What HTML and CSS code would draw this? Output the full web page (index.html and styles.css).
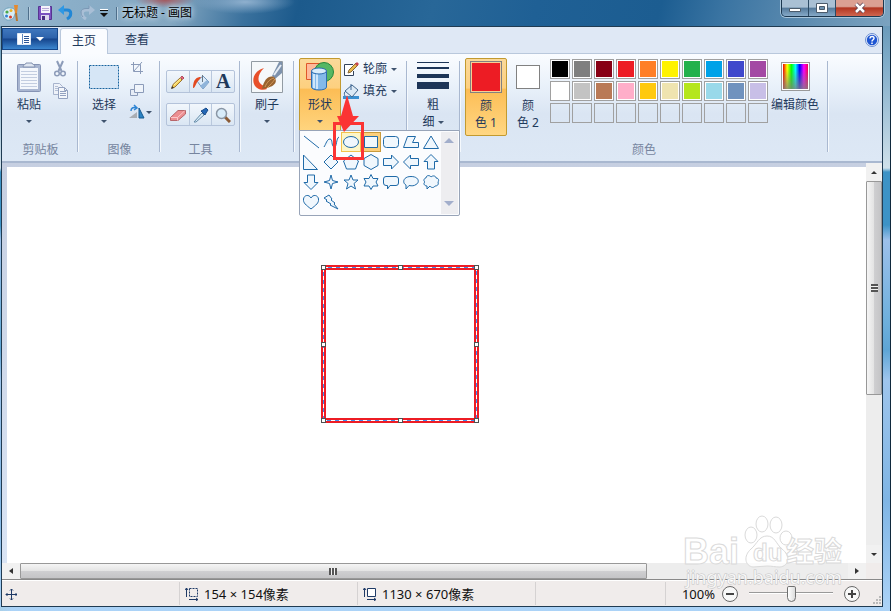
FILE: index.html
```html
<!DOCTYPE html>
<html lang="zh-CN">
<head>
<meta charset="utf-8">
<title>无标题 - 画图</title>
<link rel="stylesheet" href="styles.css">
</head>
<body>
<div class="window">
  <header class="titlebar">
    <div class="quick">
      <svg class="app-icon" width="18" height="18" viewBox="0 0 18 18"><path d="M1 11C0 6 5 3 9 4c4 0 5 4 4 6s-1 5-5 6-6-2-7-5z" fill="#d9edf5" stroke="#6fa3bd"/><circle cx="5" cy="8" r="1.6" fill="#4aa94a"/><circle cx="9" cy="6.500" r="1.500" fill="#e8b32a"/><circle cx="4.500" cy="12" r="1.500" fill="#3481d6"/><circle cx="8.500" cy="13" r="1.500" fill="#d43b2c"/><path d="M14 9l1 8" stroke="#b9762e" stroke-width="2"/><path d="M12 1l4 0-1 8h-2z" fill="#e68a2d"/></svg>
      <i class="bar"></i>
      <button aria-label="保存"><svg width="16" height="16" viewBox="0 0 16 16"><path d="M1.500 1.500h13v13h-13z" fill="#7b4fc0" stroke="#573491"/><path d="M4 1h9v7H4z" fill="#f5f2fb"/><path d="M5 3.500h7M5 5.500h7" stroke="#b8a8d8"/><path d="M4 10h8v5H4z" fill="#ded5ee"/><path d="M5 11h3v4H5z" fill="#4a2c80"/></svg></button>
      <button aria-label="撤消"><svg width="16" height="16" viewBox="0 0 16 16"><path d="M4 5h5c5 0 5 6 0 9" fill="none" stroke="#2187d6" stroke-width="3"/><path d="M6 0v10L0 5z" fill="#2e98e4"/></svg></button>
      <button aria-label="重做" disabled><svg width="16" height="16" viewBox="0 0 16 16"><path d="M12 5H7c-5 0-5 6 0 9" fill="none" stroke="#a9bfd6" stroke-width="3"/><path d="M10 0v10l6-5z" fill="#a9bfd6"/><path d="M10 .5v3H7C1 3.500 1 9 4 12" fill="none" stroke="#7b98b5"/></svg></button>
      <button aria-label="自定义快速访问工具栏"><svg width="8" height="8" viewBox="0 0 8 8"><path d="M0 0h8v1H0z" fill="#fff"/><path d="M0 1h8v1H0zM0 4h8L4 8z" fill="#111"/></svg></button>
      <i class="bar"></i>
    </div>
    <h1>无标题 - 画图</h1>
    <div class="controls">
      <button aria-label="最小化"><svg width="12" height="12" viewBox="0 0 12 12"><path d="M.5 6.500h11v3H.5z" fill="#fff" stroke="#4b5b6b"/></svg></button>
      <button aria-label="最大化"><svg width="12" height="12" viewBox="0 0 12 12"><path d="M.5 1.500h11v9H.5z" fill="#fff" stroke="#4b5b6b"/><path d="M3.500 4.500h5v3h-5z" fill="#6f93b0" stroke="#4b5b6b"/></svg></button>
      <button class="close" aria-label="关闭"><svg width="12" height="12" viewBox="0 0 12 12"><path d="M2 2l8 8M10 2l-8 8" stroke="#5b4050" stroke-width="4"/><path d="M2 2l8 8M10 2l-8 8" stroke="#fff" stroke-width="2.500"/></svg></button>
    </div>
  </header>

  <div class="client">
    <nav class="tabs">
      <button class="file" aria-label="画图菜单"><svg width="14" height="12" viewBox="0 0 14 12"><path d="M.5.5h13v11H.5z" fill="#fff" stroke="#dfe9f6"/><path d="M5.500 1v10" stroke="#5f86bd"/><path d="M7 3.500h5M7 5.500h5M7 7.500h5M7 9.500h5" stroke="#2c5595"/></svg><i class="caret white"></i></button>
      <a class="tab active" href="#home">主页</a>
      <a class="tab" href="#view">查看</a>
      <button class="help" aria-label="帮助"><svg width="14" height="14" viewBox="0 0 14 14"><circle cx="7" cy="7" r="6.500" fill="#e9f0fb" stroke="#6d8fd0"/><circle cx="7" cy="7" r="5.200" fill="#1f56d2"/><path d="M5 5.500c0-3 4.500-2.500 4 0C8.800 6.800 7 6.800 7 8.500M7 9.500V11" fill="none" stroke="#fff" stroke-width="1.500"/></svg></button>
    </nav>

    <section class="ribbon" id="home">
      <div class="group clipboard">
        <div class="body">
          <button class="big">
            <svg width="32" height="32" viewBox="0 0 32 32"><rect x="4.500" y="3.500" width="23" height="27" rx="1" fill="#a9b6d1" stroke="#8694b5"/><path d="M7 7h18v21H7z" fill="#f4f7fc"/><path d="M8 10.500h16M8 13.500h16M8 16.500h16M8 19.500h16M8 22.500h16M8 25.500h16" stroke="#c3cde0"/><path d="M10 6c0-3 3-2 3-4h6c0 2 3 1 3 4z" fill="#dfe6f1" stroke="#8492b0"/></svg>
            <span>粘贴</span><i class="caret"></i>
          </button>
          <div class="stack">
            <button aria-label="剪切"><svg width="16" height="18" viewBox="0 0 16 18"><path d="M5 1l4.500 10M11 1L6.500 11" stroke="#8d9cb9" stroke-width="2"/><circle cx="5" cy="13.500" r="2.300" fill="none" stroke="#8d9cb9" stroke-width="1.500"/><circle cx="11" cy="13.500" r="2.300" fill="none" stroke="#8d9cb9" stroke-width="1.500"/></svg></button>
            <button aria-label="复制"><svg width="16" height="18" viewBox="0 0 16 18"><path d="M1.500 1.500h6l3 3v8h-9z" fill="#eef2f9" stroke="#a7b4cd"/><path d="M3 4.500h3M3 6.500h4M3 8.500h4" stroke="#b3bfd5"/><path d="M6.500 5.500h6l3 3v8h-9z" fill="#f4f7fb" stroke="#93a2c0"/><path d="M12.500 5.500v3h3M8 9.500h6M8 11.500h6M8 13.500h6" fill="none" stroke="#93a2c0"/></svg></button>
          </div>
        </div>
        <h2>剪贴板</h2>
      </div>

      <div class="group image">
        <div class="body">
          <button class="big">
            <svg width="32" height="32" viewBox="0 0 32 32"><path d="M1.500 4.500h29v23h-29z" fill="#d6e6f6" stroke="#17639f" stroke-dasharray="2 1"/></svg>
            <span>选择</span><i class="caret"></i>
          </button>
          <div class="stack">
            <button aria-label="裁剪"><svg width="16" height="16" viewBox="0 0 16 16"><path d="M4.500 2v9.500H14M2 4.500h9.500V14M5 11l8-9" fill="none" stroke="#8b9bb9"/></svg></button>
            <button aria-label="重新调整大小"><svg width="16" height="16" viewBox="0 0 16 16"><path d="M1.500 7.500h7v6h-7z" fill="#e7edf6" stroke="#8b9bb9"/><path d="M5.500 2.500h9v8h-9z" fill="#eff4fa" stroke="#8b9bb9"/></svg></button>
            <button class="rotate" aria-label="旋转"><svg width="16" height="16" viewBox="0 0 16 16"><path d="M0 14L8 8v6z" fill="#a9adb3"/><path d="M10 14V4l5 10z" fill="#2c83c4" stroke="#14588f"/><path d="M2 7c0-3 2-4 5-3M5 1l3 3-3 2" fill="none" stroke="#2d84d4" stroke-width="1.500"/></svg><i class="caret"></i></button>
          </div>
        </div>
        <h2>图像</h2>
      </div>

      <div class="group tools">
        <div class="body">
          <div class="toolbar">
            <button aria-label="铅笔"><svg width="16" height="16" viewBox="0 0 16 16"><path d="M2 14l1-3.500L10 4l2 2-7 7z" fill="#f8d45c" stroke="#9a7434"/><path d="M4 11l7-6.500" stroke="#fff0a0"/><path d="M10.500 3.500L12 2l2 2-1.500 1.500z" fill="#e5677c" stroke="#b0505e"/><path d="M1 15l1-3 2 2z" fill="#3e3529"/></svg></button>
            <button aria-label="用颜色填充"><svg width="18" height="16" viewBox="0 0 18 16"><path d="M5 7l6-5 6 6-6 7z" fill="#dcebf9" stroke="#6e93bb"/><path d="M8 12l7-6 2 2-6 7z" fill="#8fb4da"/><path d="M10.500 8V1" stroke="#687886"/><path d="M9 3C5 3 1 5 1 14c2 1 3-6 6-8z" fill="#e34a20"/></svg></button>
            <button aria-label="文本" class="letter">A</button>
          </div>
          <div class="toolbar">
            <button aria-label="橡皮擦"><svg width="16" height="16" viewBox="0 0 16 16"><path d="M.5 10.500L8 3.500h7.500V7L8 13.500H.5z" fill="#ec8e91" stroke="#b7656a"/><path d="M1 10.500h6.500l7-6.500M7.500 10.500v3" fill="none" stroke="#fbc6c8"/></svg></button>
            <button aria-label="颜色选取器"><svg width="16" height="16" viewBox="0 0 16 16"><path d="M1 15l8-9 2 2-8 7z" fill="#d7ebf7" stroke="#668ca9"/><path d="M8 4l4 4 1-2 2-3-2-2-3 2z" fill="#2368b6" stroke="#174a8a"/></svg></button>
            <button aria-label="放大镜"><svg width="16" height="16" viewBox="0 0 16 16"><path d="M10 10l5 5" stroke="#8b5b37" stroke-width="3"/><circle cx="6.500" cy="6.500" r="5" fill="#d8ecfa" stroke="#8996a5" stroke-width="1.500"/></svg></button>
          </div>
        </div>
        <h2>工具</h2>
      </div>

      <div class="group brushes">
        <div class="body">
          <button class="big">
            <svg width="32" height="32" viewBox="0 0 32 32"><path d="M.5.5h31v31H.5z" fill="#f5f8fa" stroke="#929ba3"/><path d="M13 7C3 10 1 18 3 23c2 5 8 7 13 5l-2-3C6 23 5 15 13 7z" fill="#e8502a"/><path d="M21 15l7-14h3v11l-7 6z" fill="#7e92ad"/><path d="M23 14l7-10" stroke="#e6edf5" stroke-width="2"/><path d="M11 28c2-10 7-14 12-12 4 4 2 10-12 12z" fill="#99632f"/><path d="M14 26c2-5 5-8 9-9M16 27c3-3 6-6 8-9" fill="none" stroke="#d39a5b"/></svg>
            <span>刷子</span><i class="caret"></i>
          </button>
        </div>
      </div>

      <div class="group shapes">
        <div class="body">
          <button class="big selected" aria-expanded="true">
            <svg width="32" height="32" viewBox="0 0 32 32"><path d="M2.500 2.500h15v16h-15z" fill="#ffb99a" stroke="#e0562a"/><circle cx="20" cy="11" r="9.500" fill="#56b763" stroke="#26873b"/><path d="M7.500 10v16c0 4 15 4 15 0V10z" fill="#83b9ea" stroke="#2e6db0"/><path d="M10 13v14M13 13v15" stroke="#cfe6fa" stroke-width="2"/><ellipse cx="15" cy="10" rx="7.500" ry="3" fill="#d9ecfb" stroke="#2e6db0"/></svg>
            <span>形状</span><i class="caret"></i>
          </button>
          <div class="options">
            <button><svg width="16" height="16" viewBox="0 0 16 16"><path d="M10 3.500H1.500v11h9V10" fill="#fff" stroke="#33435c"/><path d="M5 12l1-3 7-7 2 2-7 7z" fill="#e6b84d" stroke="#8b6836"/><path d="M12 3l2-2 2 2-2 2z" fill="#c74551"/></svg><span>轮廓</span><i class="caret"></i></button>
            <button><svg width="16" height="16" viewBox="0 0 16 16"><path d="M0 13h16v3H0z" fill="#3b90d1"/><path d="M2 8l7-6 6 5-6 7z" fill="#dceaf6" stroke="#43688d"/><path d="M8 7V1M3 8c-2 1-2 3-1 5" fill="none" stroke="#3e6793"/></svg><span>填充</span><i class="caret"></i></button>
          </div>
          <div class="gallery">
            <div class="shape-grid">
              <button aria-label="直线"><svg viewBox="0 0 20 20"><path d="M3 4l15 12"/></svg></button>
              <button aria-label="曲线"><svg viewBox="0 0 20 20"><path d="M3 15c2-3 3-8 6-8s1 7 4 8 2-9 5-10"/></svg></button>
              <button aria-label="椭圆形" class="hover"><svg viewBox="0 0 20 20"><ellipse cx="10" cy="10" rx="7.500" ry="5.500"/></svg></button>
              <button aria-label="矩形" class="chosen"><svg viewBox="0 0 20 20"><path d="M3.500 4.500h13v11h-13z"/></svg></button>
              <button aria-label="圆角矩形"><svg viewBox="0 0 20 20"><rect x="2.500" y="4.500" width="15" height="11" rx="3"/></svg></button>
              <button aria-label="多边形"><svg viewBox="0 0 20 20"><path d="M6.500 4.500h8l-3 6h6v5h-15z"/></svg></button>
              <button aria-label="三角形"><svg viewBox="0 0 20 20"><path d="M10 4l7.500 12.500h-15z"/></svg></button>
              <button aria-label="直角三角形"><svg viewBox="0 0 20 20"><path d="M2.500 3v14.500h14z"/></svg></button>
              <button aria-label="菱形"><svg viewBox="0 0 20 20"><path d="M10 3l7 7-7 7-7-7z"/></svg></button>
              <button aria-label="五边形"><svg viewBox="0 0 20 20"><path d="M10 3l7.500 6-3 8h-9l-3-8z"/></svg></button>
              <button aria-label="六边形"><svg viewBox="0 0 20 20"><path d="M10 2.500l7 4v7l-7 4-7-4v-7z"/></svg></button>
              <button aria-label="右箭头"><svg viewBox="0 0 20 20"><path d="M2.500 6.500h8V3l7 7-7 7v-3.500h-8z"/></svg></button>
              <button aria-label="左箭头"><svg viewBox="0 0 20 20"><path d="M17.500 6.500h-8V3l-7 7 7 7v-3.500h8z"/></svg></button>
              <button aria-label="上箭头"><svg viewBox="0 0 20 20"><path d="M6.500 17V9.500H3l7-7 7 7h-3.500V17z"/></svg></button>
              <button aria-label="下箭头"><svg viewBox="0 0 20 20"><path d="M6.500 3v7.500H3l7 7 7-7h-3.500V3z"/></svg></button>
              <button aria-label="四角星形"><svg viewBox="0 0 20 20"><path d="M10 3l1.500 5.500L17 10l-5.500 1.500L10 17l-1.500-5.500L3 10l5.500-1.500z"/></svg></button>
              <button aria-label="五角星形"><svg viewBox="0 0 20 20"><path d="M10 3l2 5h5l-4 3.500 1.500 5.500-4.500-3-4.500 3L7 11.500 3 8h5z"/></svg></button>
              <button aria-label="六角星形"><svg viewBox="0 0 20 20"><path d="M10 2.500l2 4h5L15 10l2 4h-5l-2 3.500L8 14H3l2-4-2-3.500h5z"/></svg></button>
              <button aria-label="圆角矩形标注"><svg viewBox="0 0 20 20"><path d="M5 4.500h10q2.500 0 2.500 2.500v4q0 2.500-2.500 2.500H9L6.500 17v-3.500H5Q2.500 13.500 2.500 11V7q0-2.500 2.500-2.500z"/></svg></button>
              <button aria-label="椭圆形标注"><svg viewBox="0 0 20 20"><path d="M5 13C1 11 2 4.500 10 4.500s9 6 5 8c-2 1.500-4 1.500-7 1L5 17z"/></svg></button>
              <button aria-label="云形标注"><svg viewBox="0 0 20 20"><path d="M5 6c0-3 4-3 5-1 2-2 5-1 5 1 3 0 3 3 2 4 1 3-1 4-3 4-1 2-4 2-5 0l-3 3 0-3c-3 0-4-3-2-4-2-1-1-4 1-4z"/></svg></button>
              <button aria-label="心形"><svg viewBox="0 0 20 20"><path d="M10 17C5 13 2 11 2.500 7 3 3 8 2 10 6c2-4 7-3 7.500 1 .5 4-2.500 6-7.500 10z"/></svg></button>
              <button aria-label="闪电形"><svg viewBox="0 0 20 20"><path d="M3 6l5-3 3 4-1 1 4 3-1 1 4 5-8-4 1-1-5-3 1-1z"/></svg></button>
            </div>
            <div class="gallery-scroll"><i class="caret up pale"></i><i class="caret pale"></i></div>
          </div>
          <svg class="callout" width="32" height="68" viewBox="0 0 32 68"><path d="M1.500 31.500h28v35h-28z" fill="none" stroke="#fb3434" stroke-width="3"/><path d="M14 3L8 24H4l7 16 15-16h-6z" fill="#fb3434"/></svg>
        </div>
      </div>

      <div class="group size">
        <div class="body">
          <button class="big">
            <svg width="32" height="32" viewBox="0 0 32 32"><path d="M0 1h32v1H0zM0 6h32v2H0zM0 13h32v4H0zM0 21h32v7H0z" fill="#1d3557"/></svg>
            <span>粗<br>细 <i class="caret"></i></span>
          </button>
        </div>
      </div>

      <div class="group colors">
        <div class="body">
          <button class="big color selected"><i class="well red"></i><span>颜<br>色 1</span></button>
          <button class="big color"><i class="well small"></i><span>颜<br>色 2</span></button>
          <div class="palette">
            <button style="--c:#000000" aria-label="黑色"></button><button style="--c:#7f7f7f" aria-label="灰色"></button><button style="--c:#880015" aria-label="深红色"></button><button style="--c:#ed1c24" aria-label="红色"></button><button style="--c:#ff7f27" aria-label="橙色"></button><button style="--c:#fff200" aria-label="黄色"></button><button style="--c:#22b14c" aria-label="绿色"></button><button style="--c:#00a2e8" aria-label="青绿色"></button><button style="--c:#3f48cc" aria-label="靛青色"></button><button style="--c:#a349a4" aria-label="紫色"></button>
            <button style="--c:#ffffff" aria-label="白色"></button><button style="--c:#c3c3c3" aria-label="浅灰色"></button><button style="--c:#b97a57" aria-label="褐色"></button><button style="--c:#ffaec9" aria-label="玫瑰色"></button><button style="--c:#ffc90e" aria-label="金色"></button><button style="--c:#efe4b0" aria-label="浅黄色"></button><button style="--c:#b5e61d" aria-label="酸橙色"></button><button style="--c:#99d9ea" aria-label="淡青绿色"></button><button style="--c:#7092be" aria-label="蓝灰色"></button><button style="--c:#c8bfe7" aria-label="淡紫色"></button>
            <i></i><i></i><i></i><i></i><i></i><i></i><i></i><i></i><i></i><i></i>
          </div>
          <button class="big edit"><i class="spectrum"></i><span>编辑颜色</span></button>
        </div>
        <h2>颜色</h2>
      </div>
    </section>

    <main class="workspace">
      <div class="desk">
        <div class="canvas">
          <svg class="selection" width="158" height="158" viewBox="0 0 158 158"><g fill="none"><path d="M2.500 2.500h153v153h-153z" stroke="#ed1c24" stroke-width="5"/><path d="M2.500 2.500h153v153h-153z" stroke="#3f8cf0"/><path d="M2.500 2.500h153v153h-153z" stroke="#fff" stroke-dasharray="4 4"/></g><g fill="#fff" stroke="#505050"><path d="M.5.5h4v4h-4zM77.500.5h4v4h-4zM153.500.5h4v4h-4zM.5 77.500h4v4h-4zM153.500 77.500h4v4h-4zM.5 153.500h4v4h-4zM77.500 153.500h4v4h-4zM153.500 153.500h4v4h-4z"/></g></svg>
        </div>
      </div>
      <div class="scroll vertical">
        <span class="end"><i class="caret up dark"></i></span>
        <div class="thumb"><i class="grip"></i></div><div class="track"></div>
        <span class="end"><i class="caret dark"></i></span>
      </div>
      <div class="scroll horizontal">
        <span class="end"><i class="caret left dark"></i></span>
        <div class="thumb"><i class="grip"></i></div><div class="track"></div>
        <span class="end"><i class="caret right dark"></i></span>
      </div>
      <div class="corner"></div>
    </main>

    <footer class="status">
      <div class="cell position"><svg width="12" height="12" viewBox="0 0 12 12"><path d="M6.500 1v11M1 6.500h11M5 2.500l1.500-1.500L8 2.500M5 10.500L6.500 12 8 10.500M2.500 5L1 6.500 2.500 8M10.500 5L12 6.500 10.500 8" fill="none" stroke="#1f3a66"/></svg></div>
      <div class="cell"><svg width="14" height="14" viewBox="0 0 14 14"><path d="M4.500 1.500h8v8h-8z" fill="none" stroke="#1f3a66" stroke-dasharray="2 1"/><path d="M1.500 10V1M0 3l1.500-2L3 3M4 12.500h9M11 11l2 1.500-2 1.500" fill="none" stroke="#1f3a66"/></svg><span>154 × 154像素</span></div>
      <div class="cell"><svg width="14" height="14" viewBox="0 0 14 14"><path d="M4.500 1.500h8v8h-8z" fill="#fff" stroke="#1f3a66"/><path d="M1.500 10V1M0 3l1.500-2L3 3M4 12.500h9M11 11l2 1.500-2 1.500" fill="none" stroke="#1f3a66"/></svg><span>1130 × 670像素</span></div>
      <div class="cell spare"></div>
      <div class="zoom">
        <label for="zoom">100%</label>
        <button aria-label="缩小"><svg width="16" height="16" viewBox="0 0 16 16"><circle cx="8" cy="8" r="7.500" fill="#f8f8f8" stroke="#686868"/><path d="M4 7h8v2H4z" fill="#444"/></svg></button>
        <input id="zoom" type="range" min="0" max="100" value="50">
        <button aria-label="放大"><svg width="16" height="16" viewBox="0 0 16 16"><circle cx="8" cy="8" r="7.500" fill="#f8f8f8" stroke="#686868"/><path d="M4 7h8v2H4zM7 4h2v8H7z" fill="#444"/></svg></button>
        <svg class="resize" width="10" height="10" viewBox="0 0 10 10"><path d="M7 1h2v2H7zM4 4h2v2H4zM7 4h2v2H7zM1 7h2v2H1zM4 7h2v2H4zM7 7h2v2H7z" fill="#b9b9b9"/></svg>
      </div>
    </footer>
  </div>
  <svg class="watermark" width="162" height="82" viewBox="0 0 162 82">
    <g class="mark">
      <text x="-2" y="51" class="latin">Bai</text>
      <ellipse cx="66" cy="22" rx="6" ry="8"/><ellipse cx="77" cy="11" rx="6" ry="8"/><ellipse cx="91" cy="12" rx="6" ry="8"/><ellipse cx="101" cy="25" rx="6" ry="7"/>
      <path d="M82 23c8 0 9 8 15 13 9 7 7 17-2 18-5 0-8-1-13-1s-9 1-14 1c-8-1-10-11-2-18 6-5 8-13 16-13z"/>
      <text x="68" y="48" class="du">du</text>
      <text x="101" y="49" class="cjk">经验</text>
    </g>
    <text x="1" y="71" class="url">jingyan.baidu.com</text>
  </svg>
</div>
</body>
</html>
```
FILE: styles.css
```css
* { box-sizing: border-box; }
body {
  margin: 0;
  font: 12px/16px "Noto Sans", "Noto Sans CJK SC", sans-serif;
  color: #1e395b;
}
button { border: 0; padding: 0; margin: 0; background: none; font: inherit; color: inherit; }
svg, i { display: block; flex: none; }
h1, h2 { margin: 0; font: inherit; }

.window {
  position: relative;
  display: flex;
  flex-direction: column;
  height: 100vh;
  min-height: 400px;
  overflow: hidden;
  padding: 0 7px 4px 1px;
  background:
    linear-gradient(90deg, #a8cfe8 0, transparent 12px) left bottom / 100% 4px no-repeat,
    linear-gradient(180deg, #5c8db0 0, #7eabc8 60px, #cfe0ea 168px, #3d93c6 172px, #3d93c6 225px, #9cc0ea 240px, #6fb0dc 320px, #5ea5d5 350px, #9ec5ec 380px, #7fb5e4 500px, #acd3f7 100%);
  border-right: 1px solid #10293d;
}

.titlebar {
  display: flex;
  align-items: center;
  flex: none;
  height: 26px;
  margin: 0 -7px 0 -1px;
  background:
    radial-gradient(ellipse 50px 12px at 245px 2px, #8fb0ce, transparent),
    radial-gradient(ellipse 30px 8px at 165px 0, #a4585e, transparent),
    linear-gradient(105deg, #9bbacf 0, #8aaec8 70px, #84a7c1 170px, #3a719d 240px, #1c5a8c 290px, #286798 420px, #1f6095 520px, #1c5d91 640px, #3a74a2 700px, #6591b3 800px, #7ba3c0 100%);
}
.quick { display: flex; align-items: center; gap: 5px; padding-left: 2px; }
.quick .bar { width: 1px; height: 13px; background: #4f6f8b; box-shadow: 1px 0 #b8cfe0; margin: 0 3px; }
h1 { color: #000; margin-left: 2px; text-shadow: 0 0 6px #d5e4ef, 0 0 6px #d5e4ef; }
.controls {
  display: flex;
  align-self: flex-start;
  margin: 0 6px 0 auto;
  height: 17px;
  border: 1px solid #1c3850;
  border-top: 0;
  border-radius: 0 0 5px 5px;
  overflow: hidden;
  box-shadow: 0 0 0 1px #a9c5da;
}
.controls button {
  display: flex;
  align-items: center;
  justify-content: center;
  width: 27px;
  border-right: 1px solid #2c4a64;
  background: linear-gradient(#a9c0d4 0 45%, #54799a 50%, #86aac8);
}
.controls .close { width: 47px; border: 0; background: linear-gradient(#dba092 0 40%, #b23621 50%, #cf6650); }

.client {
  display: flex;
  flex-direction: column;
  flex: 1;
  min-height: 0;
  border: 1px solid #203b52;
  background: #f0eceb;
}
.tabs { display: flex; align-items: flex-end; flex: none; height: 27px; background: #dfe8f5; border-bottom: 1px solid #b9c8dc; }
.file {
  display: flex;
  align-items: center;
  justify-content: center;
  gap: 5px;
  width: 56px;
  height: 22px;
  margin: 1px 2px 3px 0;
  border: 1px solid #16488c;
  background: linear-gradient(#3f77bd 0, #2d62ab 45%, #16458c 50%, #3b86cf);
}
.tab { padding: 4px 12px; height: 25px; color: #1e395b; text-decoration: none; }
.tab.active {
  height: 26px;
  margin: 0 5px -1px 0;
  padding: 4px 11px;
  background: #fafcff;
  border: 1px solid #b9c8dc;
  border-bottom: 0;
  border-radius: 3px 3px 0 0;
}
.help { margin: 0 3px 6px auto; }

.caret { width: 0; height: 0; border: 3px solid transparent; border-top-color: #3f536e; border-bottom: 0; }
.caret.white { border-width: 4px 4px 0; border-top-color: #fff; }
.caret.up { border-top: 0; border-bottom: 3px solid #3f536e; }
.caret.left { border: 3px solid transparent; border-right: 4px solid #333; border-left: 0; }
.caret.right { border: 3px solid transparent; border-left: 4px solid #333; border-right: 0; }
.caret.dark { border-top-color: #333; }
.caret.up.dark { border-bottom-color: #333; }
.caret.left.dark, .caret.right.dark { border-top-color: transparent; }
.caret.pale { border-width: 5px 5px 0; border-top-color: #a2aecb; }
.caret.up.pale { border-width: 0 5px 5px; border-bottom-color: #a2aecb; }

.ribbon {
  display: flex;
  flex: none;
  height: 109px;
  background: linear-gradient(#fafcff 0, #e9f1fa 32px, #dae5f3 60px, #dde8f5 100%);
  border-bottom: 2px solid #a9b8d0;
}
.group {
  display: flex;
  flex-direction: column;
  justify-content: space-between;
  padding: 4px 6px 3px 5px;
  background: linear-gradient(90deg, #a9b8d0 50%, #f5f9fd 50%) right 7px / 2px 91px no-repeat;
}
.body { position: relative; display: flex; }
h2 { text-align: center; color: #76859f; }
.clipboard { width: 77px; padding-left: 6px; }
.image { width: 82px; }
.tools { width: 80px; }
.brushes { width: 54px; }
.shapes { width: 113px; padding-left: 4px; padding-right: 0; }
.size { width: 53px; padding-left: 4px; }
.colors { width: 368px; padding-left: 4px; }

.big { display: flex; flex-direction: column; align-items: center; width: 42px; height: 78px; padding-top: 3px; line-height: 17px; white-space: nowrap; }
.big > span { margin-top: 3px; }
.big > .caret { margin-top: 7px; }
.big span .caret { display: inline-block; vertical-align: middle; }
.big.selected {
  border: 1px solid #c29a30;
  border-radius: 2px;
  padding-top: 2px;
  background: linear-gradient(#fbd99a 0, #fdd07f 38%, #fcbd55 40%, #ffd783);
}
.stack { display: flex; flex-direction: column; gap: 4px; padding: 2px 0 0 3px; }
.clipboard .stack { padding-left: 2px; }
.image .stack { gap: 6px; padding-left: 4px; }
.image .big { margin-left: -1px; }
.stack button { display: flex; align-items: center; }
.rotate { gap: 1px; }

.tools .body { flex-direction: column; gap: 10px; padding-top: 12px; }
.toolbar { display: flex; border: 1px solid #b4c3da; border-radius: 2px; background: linear-gradient(#f2f7fc, #dae6f3); }
.toolbar button { display: flex; align-items: center; justify-content: center; flex: 1; height: 21px; }
.toolbar button + button { border-left: 1px solid #b9c8dd; }
.toolbar .letter { font: bold 20px/21px "Liberation Serif", serif; }

.options { display: flex; flex-direction: column; gap: 6px; padding: 3px 0 0 2px; }
.options button { display: flex; align-items: center; gap: 4px; }

.gallery {
  position: absolute;
  z-index: 2;
  top: 72px;
  left: 0;
  display: flex;
  width: 161px;
  padding: 1px;
  border: 1px solid #98a4b8;
  border-radius: 0 0 2px 2px;
  background: #fbfcfe;
}
.shape-grid { display: grid; grid-template-columns: repeat(7, 20px); grid-auto-rows: 20px; padding-bottom: 2px; }
.shape-grid svg { width: 20px; height: 20px; fill: #f0f7fd; stroke: #1f6aa8; }
.shape-grid .hover { background: #fdf6c8; box-shadow: inset 0 0 0 1px #f2c24c; }
.shape-grid .chosen { background: #fccf7c; box-shadow: inset 0 0 0 1px #c89a3c; }
.gallery-scroll { display: flex; flex-direction: column; justify-content: space-between; align-items: center; flex: 1; padding: 6px 2px 8px 0; background: #ededf0; }
.callout { position: absolute; z-index: 3; top: 34px; left: 34px; }

.color { padding-top: 3px; }
.color > span { margin-top: 4px; }
.well { width: 32px; height: 32px; border: 1px solid #818181; background: #fff; }
.well.red { background: #ed1c24; box-shadow: inset 0 0 0 1px #f7cf94; }
.well.small { width: 24px; height: 24px; margin: 4px; }
.color.selected { padding-top: 2px; }
.palette { display: grid; grid-template-columns: repeat(10, 20px); grid-auto-rows: 20px; gap: 2px; padding: 1px 0 0 1px; }
.palette button, .palette i { border: 1px solid #a0a0a0; }
.palette button { background: var(--c); box-shadow: inset 0 0 0 1px #fff; }
.edit { width: 54px; padding-top: 4px; }
.spectrum {
  width: 29px;
  height: 29px;
  margin-bottom: 2px;
  border: 1px solid #999;
  background:
    linear-gradient(transparent 20%, #808080cc) content-box,
    linear-gradient(90deg, #f20000, #ff0, #0f0, #0ff, #00f, #f0f, #f00050) content-box,
    #fff;
  padding: 1px;
}

.workspace { display: grid; grid-template: 1fr 16px / 1fr 16px; flex: 1; min-height: 0; border-bottom: 1px solid #898989; }
.desk { padding: 4px 0 0 5px; background: linear-gradient(#c6cfe1, #d9e4f4); min-width: 0; }
.canvas { position: relative; height: 100%; background: #fff; overflow: hidden; }
.selection { position: absolute; left: 314px; top: 98px; shape-rendering: crispEdges; }
.scroll { display: flex; background: #ededed; }
.vertical { flex-direction: column; }
.end { display: flex; align-items: center; justify-content: center; flex: none; width: 18px; background: #f1f1f1; }
.vertical .end { width: 16px; height: 18px; }
.thumb { display: flex; align-items: center; justify-content: center; border: 1px solid #989898; border-radius: 1px; background: linear-gradient(#f5f5f5 0, #e3e3e3 50%, #cfcfd1 52%, #c4c4c6); }
.vertical .thumb { flex: 214; background: linear-gradient(90deg, #f5f5f5 0, #e3e3e3 50%, #cfcfd1 52%, #c4c4c6); }
.vertical .track { flex: 152; }
.horizontal .thumb { flex: 627; }
.horizontal .track { flex: 202; }
.grip { width: 8px; height: 7px; background: repeating-linear-gradient(90deg, #555 0 2px, #f4f4f4 2px 3px); }
.vertical .grip { width: 7px; height: 8px; background: repeating-linear-gradient(#555 0 2px, #f4f4f4 2px 3px); }
.corner { background: #f0eceb; }

.status { display: flex; flex: none; height: 26px; padding: 1px 0; font-size: 13px; color: #111; border-top: 1px solid #fff; }
.cell { display: flex; align-items: center; gap: 5px; width: 178px; padding-left: 5px; border-right: 1px solid #d5d2d2; white-space: nowrap; }
.position { padding-left: 3px; }
.spare { flex: 1; max-width: 130px; }
.zoom { display: flex; align-items: center; gap: 2px; margin-left: auto; }
.zoom label { margin-right: 5px; }
.zoom button { display: block; }
.zoom input { appearance: none; width: 102px; height: 18px; margin: 0; padding: 0 9px; background: linear-gradient(#999 50%, #fff 50%) center 7px / 84px 2px no-repeat; }
.zoom input::-webkit-slider-thumb {
  appearance: none;
  width: 9px;
  height: 16px;
  border: 1px solid #707070;
  border-radius: 2px 2px 5px 5px;
  background: linear-gradient(90deg, #fff, #dcdcdc);
}
.resize { align-self: flex-end; margin-left: 10px; }

.watermark { position: absolute; right: 43px; bottom: 16px; pointer-events: none; overflow: visible; }
.mark { fill: #ffffffc0; stroke: #dadada; stroke-width: 1; }
.latin { font: bold 36px "Liberation Sans", sans-serif; }
.du { font: bold 24px "Liberation Sans", sans-serif; }
.cjk { font: bold 28px "Noto Sans CJK SC", sans-serif; }
.url { font: 18px "Noto Sans", sans-serif; fill: #ffffffd0; stroke: #c4c4c4; stroke-width: 1px; paint-order: stroke; }
```
